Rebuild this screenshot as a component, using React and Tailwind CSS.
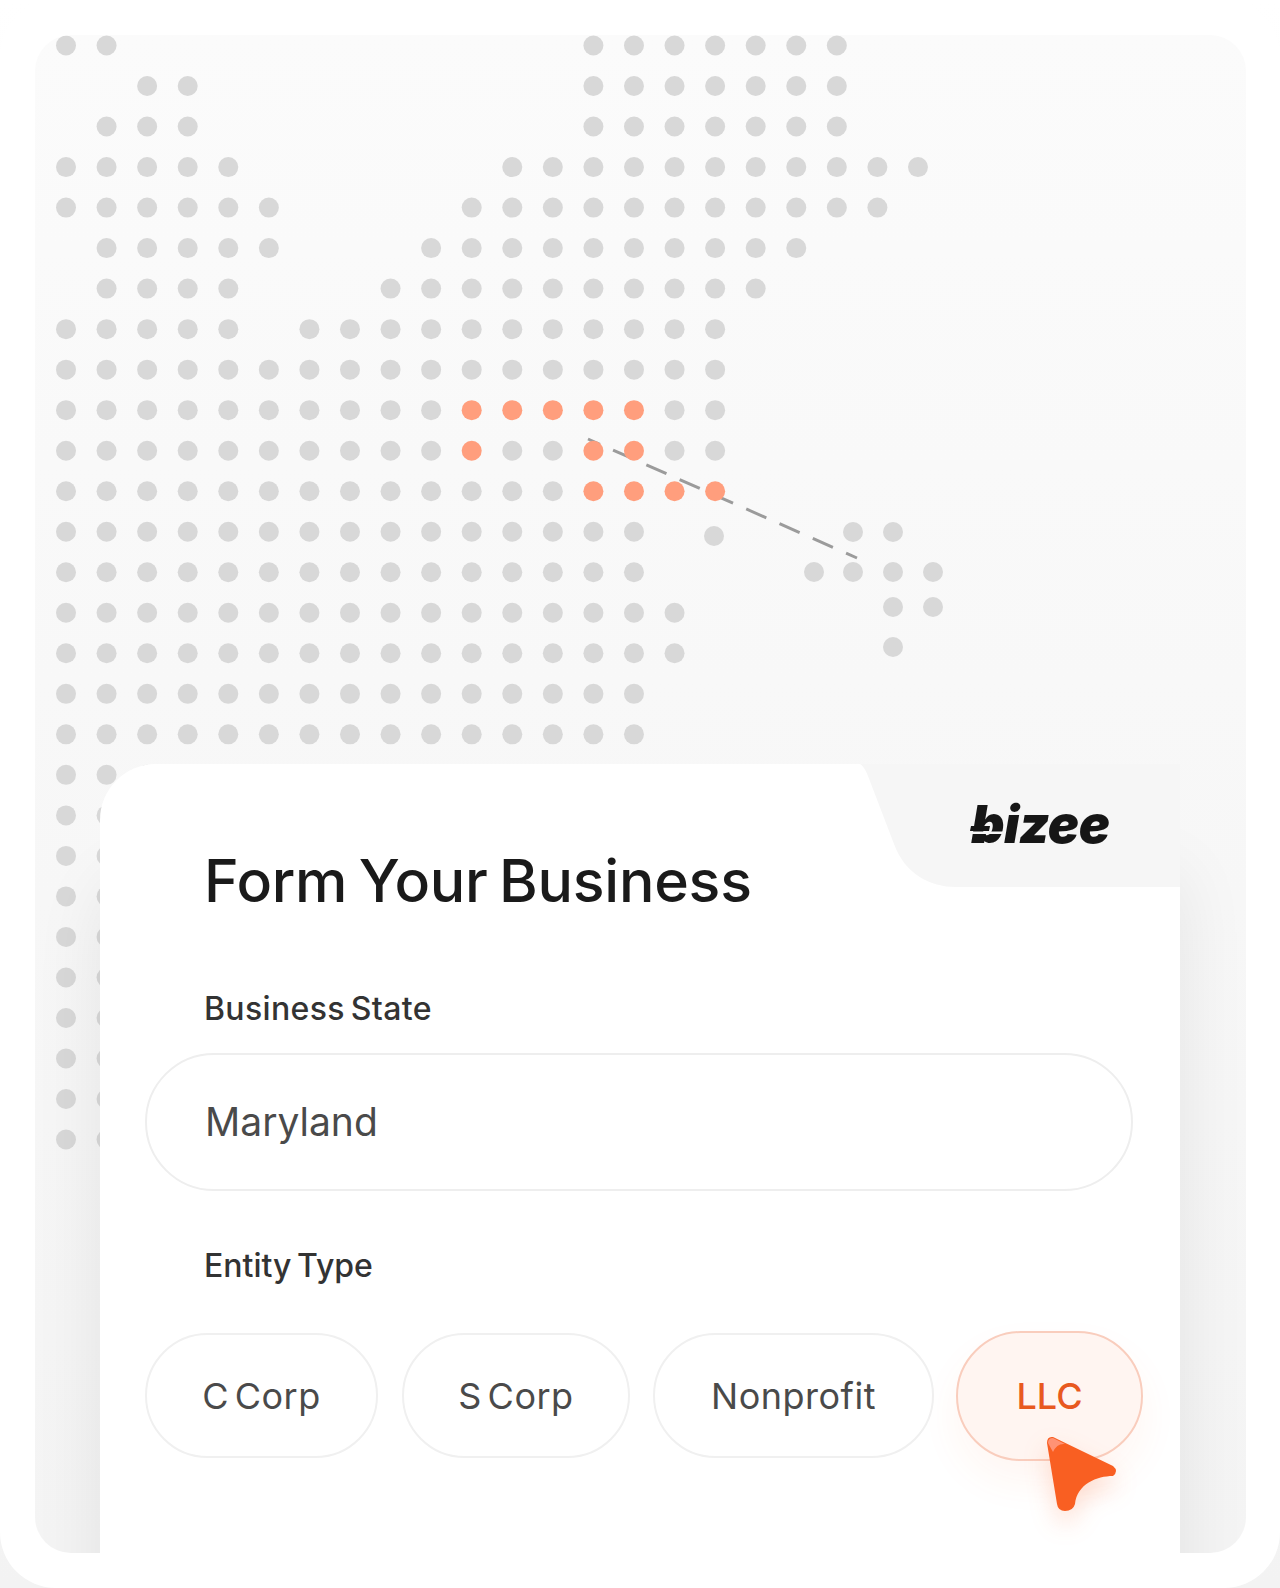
import React from 'react';

const font = { fontFamily: 'Inter, "Liberation Sans", sans-serif' };

// dot map rows: [first column, last column] ranges on a 40.6 x 40.55 grid
const rows = [
  [[0, 1], [13, 19]],
  [[2, 3], [13, 19]],
  [[1, 3], [13, 19]],
  [[0, 4], [11, 21]],
  [[0, 5], [10, 20]],
  [[1, 5], [9, 18]],
  [[1, 4], [8, 17]],
  [[0, 4], [6, 16]],
  [[0, 16]],
  [[0, 16]],
  [[0, 16]],
  [[0, 16]],
  [[0, 14]],
  [[0, 14]],
  [[0, 15]],
  [[0, 15]],
  [[0, 14]],
  [[0, 14]],
  [[0, 2]],
  [[0, 2]],
  [[0, 1]],
  [[0, 1]],
  [[0, 1]],
  [[0, 1]],
  [[0, 1]],
  [[0, 1]],
  [[0, 1]],
  [[0, 1]],
];

const orange = { 9: [10, 11, 12, 13, 14], 10: [10, 13, 14], 11: [13, 14, 15, 16] };

const islands = [
  [714, 536],
  [853, 532],
  [893, 532],
  [814, 572],
  [853, 572],
  [893, 572],
  [933, 572],
  [893, 607],
  [933, 607],
  [893, 647],
];

const DotMap = () => {
  const dots = [];
  rows.forEach((ranges, r) => {
    ranges.forEach(([from, to]) => {
      for (let c = from; c <= to; c++) {
        const hot = orange[r] && orange[r].includes(c);
        dots.push(
          <circle key={`${r}-${c}`} cx={66 + c * 40.57 - 35} cy={45.5 + r * 40.52 - 35} r="10" fill={hot ? '#ff9e7d' : '#d8d8d8'} />
        );
      }
    });
  });
  return (
    <svg className="absolute left-0 top-0" width="1211" height="1200" viewBox="0 0 1211 1200">
      <line x1="553" y1="404" x2="822" y2="523" stroke="#9b9b9b" strokeWidth="3" strokeDasharray="22 14.4" strokeDashoffset="9" />
      {dots}
      {islands.map(([x, y]) => (
        <circle key={`${x}-${y}`} cx={x - 35} cy={y - 35} r="10" fill="#d8d8d8" />
      ))}
    </svg>
  );
};

const Pill = ({ label, width }) => (
  <div className={`flex h-[125px] shrink-0 items-center justify-center rounded-full border-2 border-[#f0f0f0] bg-white text-[36px] tracking-[0.5px] [word-spacing:-5px] text-[#4a4a4a] ${width}`}>
    {label}
  </div>
);

const Cursor = () => (
  <svg
    className="absolute left-[75px] top-[93px] drop-shadow-[0_12px_12px_rgba(249,95,34,0.2)]"
    width="100"
    height="100"
    viewBox="0 0 100 100"
  >
    <path
      d="M22 13 L82 42 Q88 47 82 52 C66 52 46 60 44 80 Q42 87 34 87 Q27 87 26 80 L16 19 Q16 12 22 13 Z"
      fill="#f95f22"
    />
    <path d="M17 19 Q17 14 22 14 L34 20 Q26 19 22 28 Z" fill="#ff9274" />
  </svg>
);

const Logo = () => (
  <div className="absolute left-[870px] top-[37px] h-[44px] w-[142px]">
    <span className="absolute left-[1px] top-[-12px] text-[52px] font-black italic leading-[72px] tracking-[-0.5px] text-[#161616]">
      bizee
    </span>
    <svg className="absolute left-0 top-0" width="44" height="46" viewBox="0 0 44 46">
      <path d="M1 25 L20 25 L19 30 L0 30 Z" fill="#161616" />
      <path d="M7 33 L16 33 L14 42 L5 42 Z" fill="#161616" />
      <path d="M1 30.5 L34 30.5 L33.5 33 L0.5 33 Z" fill="#f6f6f6" />
    </svg>
  </div>
);

export default function App() {
  return (
    <div className="h-[1588px] w-[1280px] overflow-hidden bg-gradient-to-b from-white to-[#f3f3f3]" style={font}>
      <div className="h-full rounded-[56px] bg-white pb-[35px] pl-[35px] pr-[34px] pt-[35px]">
        <div className="relative h-full overflow-hidden rounded-[36px] bg-gradient-to-b from-[#fbfbfb] to-[#f4f4f4]">
          <DotMap />
          <div className="relative ml-[65px] mr-[66px] mt-[729px] h-[789px] rounded-tl-[56px] bg-white pl-[45px] pr-[47px] shadow-[0_110px_70px_rgba(0,0,0,0.08)]">
            <svg className="absolute right-0 top-0" width="320" height="124" viewBox="0 0 320 124">
              <path d="M0 0 L320 0 L320 123 L96 123 C70 123 45 110 34 80 L8 12 Q4 2 0 0 Z" fill="#f6f6f6" />
            </svg>
            <Logo />
            <h1 className="relative pl-[59px] pt-[81px] text-[59px] font-medium leading-[72px] tracking-[-0.25px] [word-spacing:-4px] text-[#1a1a1a]">
              Form Your Business
            </h1>
            <p className="pl-[59px] pt-[72px] text-[32px] font-medium leading-[40px] tracking-[0.35px] [word-spacing:-3px] text-[#333333]">Business State</p>
            <div className="mt-[24px] flex h-[138px] items-center rounded-full border-2 border-[#eeeeee] pl-[58px] text-[39px] text-[#4a4a4a]">
              Maryland
            </div>
            <p className="pl-[59px] pt-[55px] text-[32px] font-medium leading-[40px] [word-spacing:-3px] text-[#333333]">Entity Type</p>
            <div className="mt-[47px] flex items-center">
              <Pill label="C Corp" width="w-[233px]" />
              <div className="w-[24px] shrink-0" />
              <Pill label="S Corp" width="w-[228px]" />
              <div className="w-[23px] shrink-0" />
              <Pill label="Nonprofit" width="w-[281px]" />
              <div className="w-[22px] shrink-0" />
              <div className="relative -my-[4px] shrink-0">
                <div className="flex h-[130px] w-[187px] items-center justify-center rounded-full border-2 border-[#f9cdbd] bg-[#fff5f1] text-[36px] font-medium text-[#e8591f] shadow-[0_20px_40px_rgba(249,95,34,0.06)]">
                  LLC
                </div>
                <Cursor />
              </div>
            </div>
          </div>
        </div>
      </div>
    </div>
  );
}
